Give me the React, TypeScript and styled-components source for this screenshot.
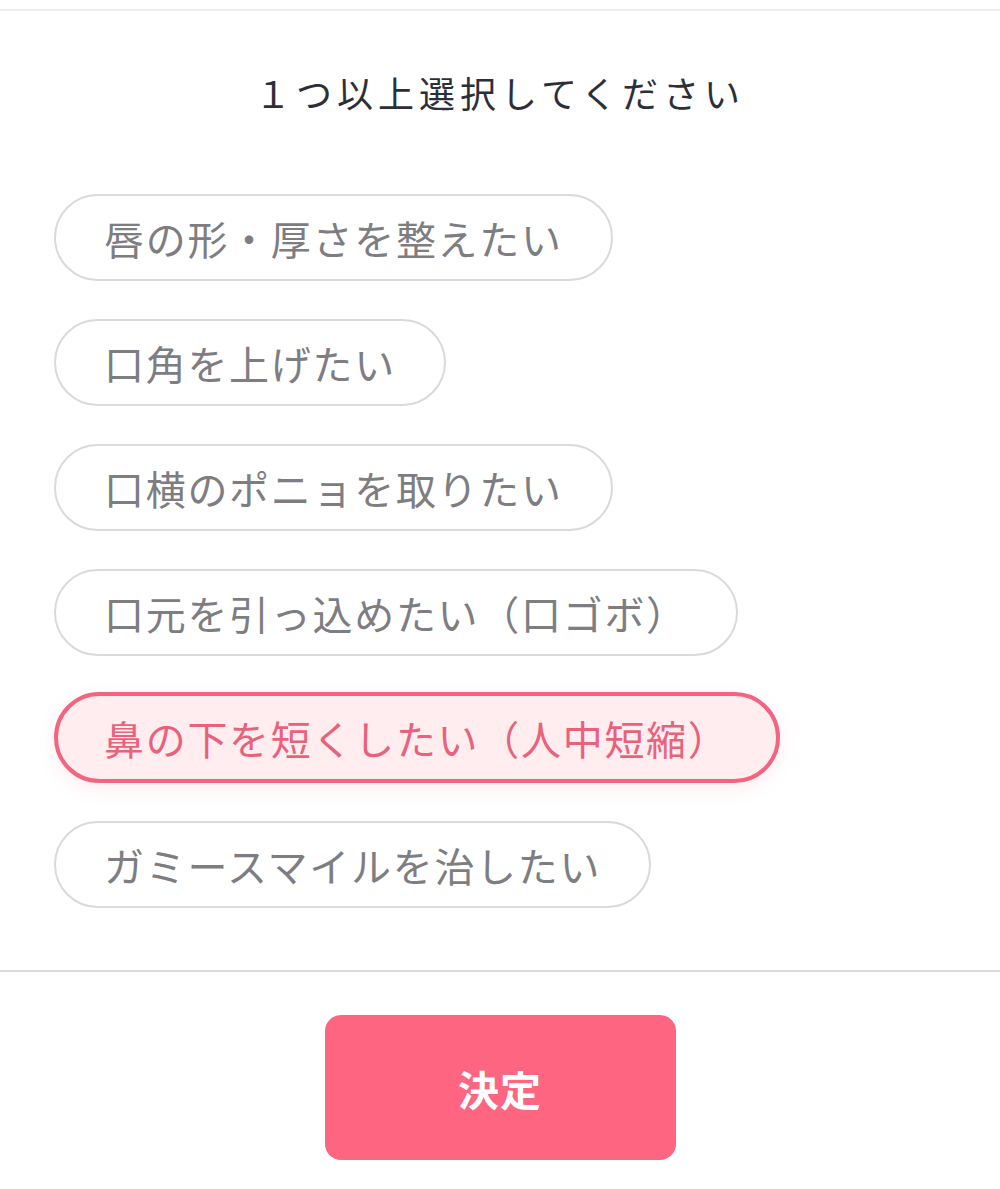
import React, { useState } from 'react'
import styled, { createGlobalStyle } from 'styled-components'

const GlobalStyle = createGlobalStyle`
    body {
        margin: 0;
        background: #ffffff;
        font-family: "Noto Sans CJK JP", "Noto Sans", sans-serif;
    }
`;

const Page = styled.div`
    width: 1000px;
    min-height: 1189px;
    background: #ffffff;
    display: flex;
    flex-direction: column;
`;

const TopRule = styled.div`
    height: 9px;
    border-bottom: 2px solid #ececec;
`;

const Title = styled.h2`
    margin: 54px 0 0;
    font-size: 36px;
    line-height: 54px;
    font-weight: 400;
    letter-spacing: 5px;
    text-align: center;
    color: #2c2f38;
`;

const ChipList = styled.div`
    margin-top: 75px;
    padding: 0 54px;
    display: flex;
    flex-direction: column;
    align-items: flex-start;
    gap: 38px;
`;

const Chip = styled.button<{ $selected: boolean }>`
    box-sizing: border-box;
    height: ${p => (p.$selected ? '91px' : '87px')};
    margin: ${p => (p.$selected ? '-2px 0 0' : '0')};
    padding: 0 ${p => (p.$selected ? '46px' : '48px')};
    display: inline-flex;
    align-items: center;
    border-radius: 46px;
    border: ${p => (p.$selected ? '4px solid #f2647f' : '2px solid #dadade')};
    background: ${p => (p.$selected ? '#ffedf0' : '#ffffff')};
    box-shadow: ${p => (p.$selected ? '0 6px 18px rgba(253, 100, 128, 0.12)' : 'none')};
    color: ${p => (p.$selected ? '#e9627b' : '#7d7d82')};
    font-family: inherit;
    font-size: 40px;
    line-height: 1;
    letter-spacing: 1.7px;
    cursor: pointer;
`;

const Divider = styled.div`
    margin-top: 62px;
    border-top: 2px solid #dcdcdc;
`;

const Footer = styled.div`
    display: flex;
    justify-content: center;
    padding-top: 43px;
`;

const SubmitButton = styled.button`
    width: 351px;
    height: 145px;
    border: none;
    border-radius: 16px;
    background: #fd6581;
    color: #ffffff;
    font-family: inherit;
    font-size: 41px;
    font-weight: 700;
    letter-spacing: 1px;
    cursor: pointer;
`;

const options = [
    '唇の形・厚さを整えたい',
    '口角を上げたい',
    '口横のポニョを取りたい',
    '口元を引っ込めたい（口ゴボ）',
    '鼻の下を短くしたい（人中短縮）',
    'ガミースマイルを治したい',
];

export default function App() {
    const [selected, setSelected] = useState<number[]>([4])

    const toggle = (i: number) => {
        setSelected(prev => prev.includes(i) ? prev.filter(x => x !== i) : [...prev, i])
    }

    return (
        <>
            <GlobalStyle />
            <Page>
                <TopRule />
                <Title>１つ以上選択してください</Title>
                <ChipList>
                    {options.map((label, i) => (
                        <Chip key={label} $selected={selected.includes(i)} onClick={() => toggle(i)}>
                            {label}
                        </Chip>
                    ))}
                </ChipList>
                <Divider />
                <Footer>
                    <SubmitButton>決定</SubmitButton>
                </Footer>
            </Page>
        </>
    )
}
